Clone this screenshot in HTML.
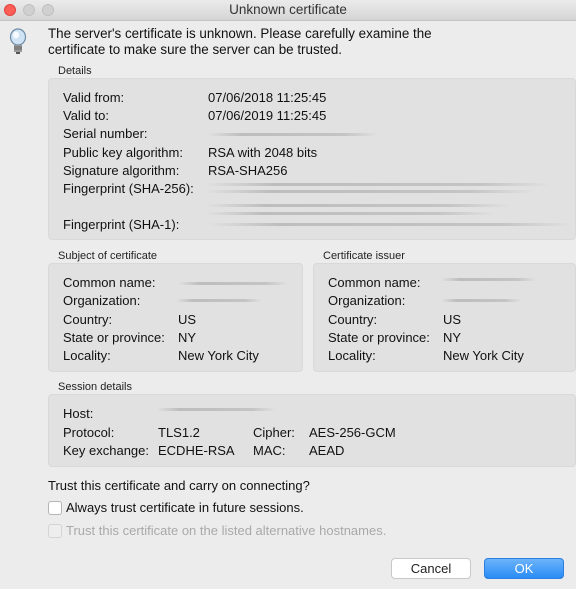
<!DOCTYPE html>
<html><head><style>
*{margin:0;padding:0;box-sizing:border-box}
body{width:576px;height:589px;background:#ececec;font-family:"Liberation Sans",sans-serif;font-size:13px;color:#111;position:relative;overflow:hidden}
.a{position:absolute;white-space:nowrap;line-height:16px}
.s{font-size:11px;color:#222}
.box{position:absolute;background:#e1e1e1;border-radius:4px;border:1px solid #d9d9d9}
.bl{position:absolute;height:3px;border-radius:2px;background:linear-gradient(90deg,rgba(190,190,190,0),#bdbdbd 20%,#c4c4c4 80%,rgba(190,190,190,0))}
.cb{position:absolute;width:14px;height:14px;border:1px solid #b5b5b5;border-radius:3px;background:#fff}
.btn{position:absolute;height:21px;border-radius:4px;text-align:center;line-height:20px;font-size:13px}
</style></head><body>
<div style="position:absolute;left:0;top:0;width:576px;height:21px;background:linear-gradient(#ebebeb,#d5d5d5);border-bottom:1px solid #c4c4c4"></div>
<div style="position:absolute;left:4px;top:4px;width:12px;height:12px;border-radius:50%;background:#fc5f57;border:1px solid #e0443e"></div>
<div style="position:absolute;left:23px;top:4px;width:12px;height:12px;border-radius:50%;background:#d0d0d0;border:1px solid #c0c0c0"></div>
<div style="position:absolute;left:42px;top:4px;width:12px;height:12px;border-radius:50%;background:#d0d0d0;border:1px solid #c0c0c0"></div>
<div class="a" style="left:0;width:576px;text-align:center;top:2px;font-size:13.5px;color:#333">Unknown certificate</div>
<svg style="position:absolute;left:8px;top:28px" width="20" height="28" viewBox="0 0 20 28"><ellipse cx="10" cy="9" rx="7.5" ry="8" fill="#cfe3f5" stroke="#6e8aa6" stroke-width="1.2"/><ellipse cx="8" cy="7" rx="3" ry="3.5" fill="#fff" opacity=".8"/><rect x="6" y="17" width="8" height="7" fill="#9a9a9a"/><path d="M6 19h8M6 21h8" stroke="#666"/><rect x="8" y="24" width="4" height="2" fill="#555"/></svg>
<div class="a" style="left:48px;top:26px;font-size:13.4px">The server's certificate is unknown. Please carefully examine the</div>
<div class="a" style="left:48px;top:42px;font-size:13.4px">certificate to make sure the server can be trusted.</div>
<div class="a s" style="left:58px;top:63px">Details</div>
<div class="box" style="left:48px;top:78px;width:528px;height:162px"></div>
<div class="a" style="left:63px;top:90px">Valid from:</div><div class="a" style="left:208px;top:90px">07/06/2018 11:25:45</div>
<div class="a" style="left:63px;top:108px">Valid to:</div><div class="a" style="left:208px;top:108px">07/06/2019 11:25:45</div>
<div class="a" style="left:63px;top:126px">Serial number:</div><div class="bl" style="left:208px;top:133px;width:170px"></div>
<div class="a" style="left:63px;top:145px">Public key algorithm:</div><div class="a" style="left:208px;top:145px">RSA with 2048 bits</div>
<div class="a" style="left:63px;top:163px">Signature algorithm:</div><div class="a" style="left:208px;top:163px">RSA-SHA256</div>
<div class="a" style="left:63px;top:181px">Fingerprint (SHA-256):</div>
<div class="bl" style="left:205px;top:183px;width:345px"></div><div class="bl" style="left:205px;top:190px;width:330px"></div>
<div class="bl" style="left:205px;top:204px;width:305px"></div><div class="bl" style="left:205px;top:212px;width:290px"></div>
<div class="a" style="left:63px;top:217px">Fingerprint (SHA-1):</div><div class="bl" style="left:208px;top:223px;width:365px"></div>
<div class="a s" style="left:58px;top:248px">Subject of certificate</div>
<div class="a s" style="left:323px;top:248px">Certificate issuer</div>
<div class="box" style="left:48px;top:263px;width:255px;height:109px"></div>
<div class="box" style="left:313px;top:263px;width:263px;height:109px"></div>
<div class="a" style="left:63px;top:275px">Common name:</div><div class="bl" style="left:178px;top:282px;width:110px"></div>
<div class="a" style="left:63px;top:293px">Organization:</div><div class="bl" style="left:176px;top:299px;width:86px"></div>
<div class="a" style="left:63px;top:312px">Country:</div><div class="a" style="left:178px;top:312px">US</div>
<div class="a" style="left:63px;top:330px">State or province:</div><div class="a" style="left:178px;top:330px">NY</div>
<div class="a" style="left:63px;top:348px">Locality:</div><div class="a" style="left:178px;top:348px">New York City</div>
<div class="a" style="left:328px;top:275px">Common name:</div><div class="bl" style="left:441px;top:278px;width:95px"></div>
<div class="a" style="left:328px;top:293px">Organization:</div><div class="bl" style="left:441px;top:299px;width:80px"></div>
<div class="a" style="left:328px;top:312px">Country:</div><div class="a" style="left:443px;top:312px">US</div>
<div class="a" style="left:328px;top:330px">State or province:</div><div class="a" style="left:443px;top:330px">NY</div>
<div class="a" style="left:328px;top:348px">Locality:</div><div class="a" style="left:443px;top:348px">New York City</div>
<div class="a s" style="left:58px;top:379px">Session details</div>
<div class="box" style="left:48px;top:394px;width:528px;height:73px"></div>
<div class="a" style="left:63px;top:406px">Host:</div><div class="bl" style="left:156px;top:408px;width:120px"></div>
<div class="a" style="left:63px;top:425px">Protocol:</div><div class="a" style="left:158px;top:425px">TLS1.2</div>
<div class="a" style="left:253px;top:425px">Cipher:</div><div class="a" style="left:309px;top:425px">AES-256-GCM</div>
<div class="a" style="left:63px;top:443px">Key exchange:</div><div class="a" style="left:158px;top:443px">ECDHE-RSA</div>
<div class="a" style="left:253px;top:443px">MAC:</div><div class="a" style="left:309px;top:443px">AEAD</div>
<div class="a" style="left:48px;top:478px">Trust this certificate and carry on connecting?</div>
<div class="cb" style="left:48px;top:501px"></div>
<div class="a" style="left:66px;top:500px">Always trust certificate in future sessions.</div>
<div class="cb" style="left:48px;top:524px;background:#eee;border-color:#d4d4d4"></div>
<div class="a" style="left:66px;top:523px;color:#a9a9a9">Trust this certificate on the listed alternative hostnames.</div>
<div class="btn" style="left:391px;top:558px;width:80px;background:#fff;border:1px solid #c8c8c8;color:#222">Cancel</div>
<div class="btn" style="left:484px;top:558px;width:80px;background:linear-gradient(#6cb3fa,#2a8cf6);border:1px solid #2a7fe0;color:#fff">OK</div>
</body></html>
